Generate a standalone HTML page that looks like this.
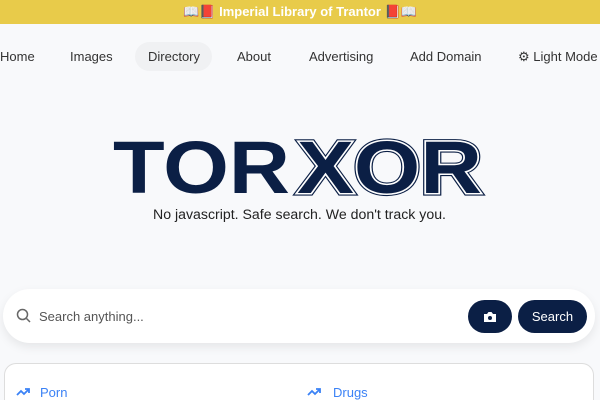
<!DOCTYPE html>
<html><head><meta charset="utf-8"><style>
*{margin:0;padding:0;box-sizing:border-box}
html,body{width:600px;height:400px;overflow:hidden}
body{background:#f8f9fb;font-family:"Liberation Sans",sans-serif;position:relative}
.top{position:absolute;left:0;top:0;width:600px;height:24px;background:#e8cb4a;color:#fff;font-weight:bold;font-size:13px;text-align:center;line-height:24px}
.nav a{position:absolute;top:49px;font-size:13px;color:#333;text-decoration:none}
.pill{position:absolute;left:135px;top:42px;width:77px;height:29px;border-radius:15px;background:#f0f1f3}
.sb{position:absolute;left:3px;top:289px;width:592px;height:54px;border-radius:27px;background:#fff;box-shadow:0 4px 10px rgba(0,0,0,.08)}
.btn{position:absolute;top:300px;height:33px;border-radius:17px;background:#0b1f45;color:#fff;font-size:13px;text-align:center;line-height:33px}
.card{position:absolute;left:4px;top:363px;width:590px;height:37px;border:1px solid #ddd;border-bottom:none;border-radius:12px 12px 0 0;background:#fff}
.lk{position:absolute;top:385px;font-size:13px;color:#3b82f6}
</style></head><body>
<div class="top">📖📕 Imperial Library of Trantor 📕📖</div>
<div class="pill"></div>
<div class="nav">
<a style="left:0">Home</a><a style="left:70px">Images</a><a style="left:148px">Directory</a><a style="left:237px">About</a><a style="left:309px">Advertising</a><a style="left:410px">Add Domain</a><a style="left:518px">⚙ Light Mode</a>
</div>
<svg style="position:absolute;left:0;top:0" width="600" height="240">
<g transform="translate(0,193) scale(1,0.86) translate(0,-193)">
<text x="113" y="193" font-family="Liberation Sans" font-weight="bold" font-size="86" fill="#0b1f45" textLength="177" lengthAdjust="spacingAndGlyphs">TOR</text>
<g font-family="Liberation Sans" font-weight="bold" font-size="86">
<text x="297" y="193" textLength="185" lengthAdjust="spacingAndGlyphs" fill="#0b1f45" stroke="#0b1f45" stroke-width="6">XOR</text>
<text x="297" y="193" textLength="185" lengthAdjust="spacingAndGlyphs" fill="#0b1f45" stroke="#fff" stroke-width="3.5">XOR</text>
<text x="297" y="193" textLength="185" lengthAdjust="spacingAndGlyphs" fill="#0b1f45">XOR</text>
</g></g>
<text x="153" y="219" font-family="Liberation Sans" font-size="13.5" fill="#222" textLength="293" lengthAdjust="spacingAndGlyphs">No javascript. Safe search. We don't track you.</text>
</svg>
<div class="sb"></div>
<svg style="position:absolute;left:16px;top:308px" width="16" height="16" viewBox="0 0 16 16"><circle cx="6.5" cy="6.5" r="5" fill="none" stroke="#666" stroke-width="1.5"/><path d="M10.5 10.5L14 14" stroke="#666" stroke-width="1.5"/></svg>
<div style="position:absolute;left:39px;top:309px;font-size:13px;color:#555">Search anything...</div>
<div class="btn" style="left:468px;width:44px"><svg width="14" height="12" viewBox="0 0 14 12" style="margin-top:11px"><path d="M1 3h3l1.5-2h3L10 3h3v8H1z" fill="#fff"/><circle cx="7" cy="7" r="2" fill="#0b1f45"/></svg></div>
<div class="btn" style="left:518px;width:69px">Search</div>
<div class="card"></div>
<svg style="position:absolute;left:16px;top:387px" width="14" height="10" viewBox="0 0 14 10"><path d="M1 8l4-4 3 3 5-5M9 2h4v4" fill="none" stroke="#3b82f6" stroke-width="1.8"/></svg>
<div class="lk" style="left:40px">Porn</div>
<svg style="position:absolute;left:307px;top:387px" width="14" height="10" viewBox="0 0 14 10"><path d="M1 8l4-4 3 3 5-5M9 2h4v4" fill="none" stroke="#3b82f6" stroke-width="1.8"/></svg>
<div class="lk" style="left:333px">Drugs</div>
</body></html>
